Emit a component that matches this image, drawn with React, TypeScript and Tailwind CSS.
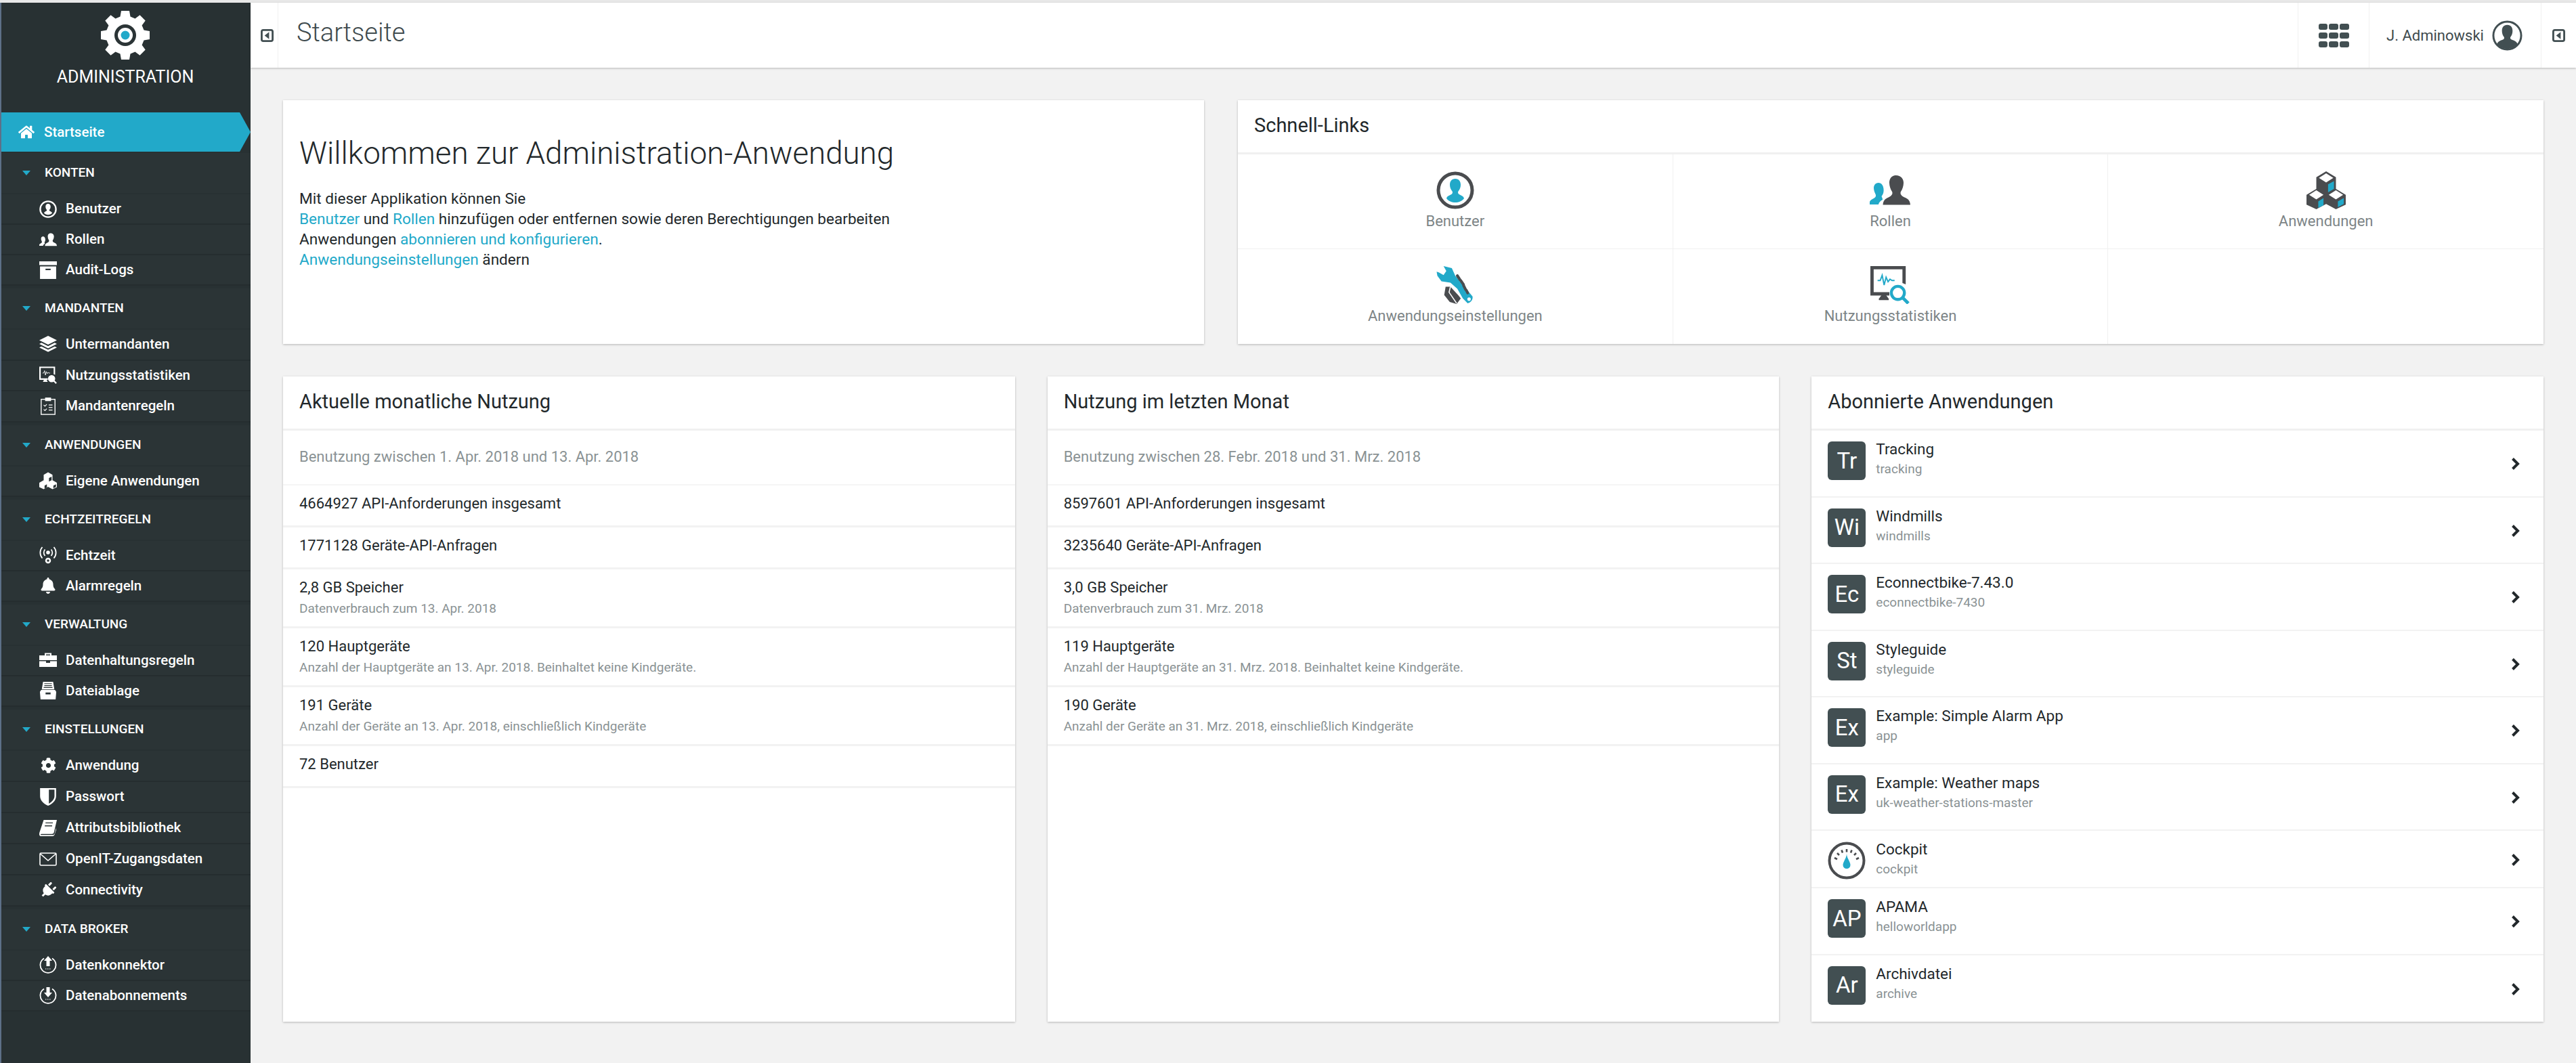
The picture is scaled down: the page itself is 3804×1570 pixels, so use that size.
import React from 'react';
import { FaBell, FaCog, FaHome, FaPlug } from 'react-icons/fa';

const BLUE = '#22a9c9';
const DARK = '#4a4c4f';

type Tone = { main?: string; accent?: string };

const UserCircleIcon = ({ main = '#fff', accent = '#fff' }: Tone) => (
  <svg viewBox="0 0 56 56" className="w-full h-full">
    <circle cx="28" cy="28" r="25" fill="none" stroke={main} strokeWidth="5" />
    <path d="M28 11c-5.500 0-8 4-8 9 0 4 1.500 7 3.500 9.500 .8 1 .6 3-.5 4-2.500 2-7 2.500-8 6.500 3 4 8 6 13 6s10-2 13-6c-1-4-5.500-4.500-8-6.500-1.100-1-1.300-3-.5-4 2-2.500 3.500-5.500 3.500-9.500 0-5-2.500-9-8-9z" fill={accent} />
  </svg>
);

const RolesIcon = ({ main = '#fff', accent = '#fff' }: Tone) => (
  <svg viewBox="0 0 60 44" className="w-full h-full">
    <path d="M13 11c-5 0-7 4-7 8 0 4 2 7 3 10 .5 2-1 4-3 5-3 1.500-6 3-6 6v3h13c.5-3 3-5.500 6-7 .2-2-.8-3-1.500-5 2.500-3 3.500-7 3-11-.4-5-3-9-7.500-9z" fill={accent} />
    <path d="M39 0c-7 0-10 5-10 11 0 5 2 10 4 13 1.500 3-.5 6-3.500 7.500C25 34 20 35 19.500 43.500H60c-.5-8.500-5.500-9.500-10.500-12C46.500 30 44.500 27 46 24c2-3 4-8 4-13 0-6-4-11-11-11z" fill={main} />
  </svg>
);

const CubesIcon = ({ main = '#fff', accent = '#fff' }: Tone) => (
  <svg viewBox="0 0 60 58" className="w-full h-full">
    <path d="M30 0l15 9v18l15 9v15l-15 7-15-8-15 8-15-7V36l15-9V9z" fill={main} />
    <path d="M30 3l11 7-11 7-11-7zM15 29l11 7-11 7-11-7zM45 29l11 7-11 7-11-7z" fill="#fff" />
    <path d="M33 20l9-5v12l-9 5zM18 46l8-5v11l-8 4zM48 46l9-5v9l-9 5z" fill={accent} />
  </svg>
);

const WrenchIcon = ({ main = '#fff', accent = '#fff' }: Tone) => (
  <svg viewBox="0 0 54 55" className="w-full h-full">
    <path d="M10 0l12 3 5 11 25 30c1 4-2 9-7 10l-7-7-8-14-10-9-13-2-6-8-1-6 3 1 7 4 4-6z" fill={accent} />
    <circle cx="47" cy="48" r="2.500" fill="#fff" />
    <path d="M30 14l4 6M35 21l4 6M39 28l3 6M43 35l2 4" stroke={main} strokeWidth="4" strokeLinecap="round" />
    <path d="M13 30l7 0 12 13 3 4-6 8-10-3-8-10z" fill={main} />
    <path d="M20 30l-2 8 11 16" stroke="#fff" strokeWidth="1.500" fill="none" />
  </svg>
);

const MonitorIcon = ({ main = '#fff', accent = '#fff' }: Tone) => (
  <svg viewBox="0 0 60 58" className="w-full h-full">
    <path d="M0 0h54v28l-5-2V5H5v35h24v5H0z" fill={main} />
    <path d="M13 50l5-7h5l5 7 v2H13z" fill={main} />
    <path d="M11 22h4l3-8 3 15 3-12 3 7 3-4 3 2h4" fill="none" stroke={accent} strokeWidth="2" />
    <circle cx="42" cy="41" r="10" fill="#fff" stroke={accent} strokeWidth="4.500" />
    <path d="M49 48l9 9" stroke={accent} strokeWidth="5" />
  </svg>
);

const ArchiveIcon = () => (
  <svg viewBox="0 0 24 24" className="w-full h-full" fill="#fff">
    <path d="M0 0h24v5H0zM1 7h22v17H1z" />
    <rect x="8.500" y="10" width="7" height="2" fill="#2b3436" />
  </svg>
);

const LayersIcon = () => (
  <svg viewBox="0 0 24 24" className="w-full h-full" fill="#fff">
    <path d="M12 0l12 6-12 6L0 6zM3 9.500l9 4.500 9-4.500 3 1.500-12 6-12-6zM3 14.500l9 4.500 9-4.500 3 1.500-12 6-12-6z" />
  </svg>
);

const ClipboardIcon = () => (
  <svg viewBox="0 0 24 28" className="w-full h-full" fill="none" stroke="#fff" strokeWidth="1.500">
    <rect x="1" y="3" width="22" height="24" />
    <rect x="8" y="1" width="8" height="4" fill="#fff" />
    <path d="M5 12l2 2 3-3M5 19l2 2 3-3M13 12h6M13 16h6M13 20h6" strokeWidth="1.200" />
  </svg>
);

const LiveIcon = () => (
  <svg viewBox="0 0 26 26" className="w-full h-full" fill="none" stroke="#fff" strokeWidth="1.800">
    <circle cx="13" cy="9" r="2.800" fill="#fff" stroke="none" />
    <path d="M8.500 4.500a7 7 0 0 0 0 9.500M17.500 4.500a7 7 0 0 1 0 9.500M4.500 1a12.500 12.500 0 0 0 0 16.500M21.500 1a12.500 12.500 0 0 1 0 16.500" />
    <circle cx="13" cy="21" r="3" strokeWidth="2.500" />
  </svg>
);

const ToolboxIcon = () => (
  <svg viewBox="0 0 26 24" className="w-full h-full" fill="#fff">
    <path d="M8 5V1.500h10V5h-2V3.500h-6V5zM0 5h26v7H0zM0 13.500h10V16h6v-2.500h10V22H0z" />
  </svg>
);

const DrawerIcon = () => (
  <svg viewBox="0 0 26 28" className="w-full h-full" fill="#fff">
    <path d="M5 0h16l2 12H3zM2 13h22l2 3-1 12H1L0 16z" />
    <path d="M7 3h12M7 6h12M6 9h14" stroke="#2b3436" strokeWidth="1.200" />
    <rect x="9" y="17" width="8" height="3" fill="#2b3436" />
  </svg>
);

const ShieldIcon = () => (
  <svg viewBox="0 0 20 22" className="w-full h-full">
    <path d="M0 0h20v10c0 6-5 10-10 12C5 20 0 16 0 10z" fill="#fff" />
    <path d="M11 2h7v8c0 4-3 7-7 9.500z" fill="#2b3436" />
  </svg>
);

const BookIcon = () => (
  <svg viewBox="0 0 24 22" className="w-full h-full" fill="#fff">
    <path d="M6 0h18l-4 17c-.4 1.500-1.500 2-3 2H3c-1 0-1.500 1-1 1.500h16c1.500 0 2.500-1 3-2l2-8v3l-2 6c-.5 1.500-1.500 2.500-3 2.500H2c-1.500 0-2-1.500-2-3 0-1 .5-2.500 1-4z" />
    <path d="M8.500 4h10M7.500 8h10" stroke="#2b3436" strokeWidth="1.200" />
  </svg>
);

const MailIcon = () => (
  <svg viewBox="0 0 26 20" className="w-full h-full" fill="none" stroke="#fff" strokeWidth="1.600">
    <rect x="1" y="1" width="24" height="18" rx="1.500" />
    <path d="M1.500 2L13 12 24.500 2" />
  </svg>
);

const CircleArrowIcon = ({ up }: { up: boolean }) => (
  <svg viewBox="0 0 26 26" className="w-full h-full">
    <path d="M7 3.500a11.500 11.500 0 1 0 12 0" fill="none" stroke="#fff" strokeWidth="1.800" />
    <path d={up ? 'M13 0l6 7h-3.500v8h-5V7H7z' : 'M10.500 1h5v8H19l-6 7-6-7h3.500z'} fill="#fff" />
    <path d="M9 19h1.500M12 19h1.500M15 19h1.500" stroke="#fff" strokeWidth="1.200" />
  </svg>
);

const GearLogo = () => (
  <svg viewBox="0 0 72 72" className="w-[72px] h-[72px]">
    <path
      fill="#fff"
      d="M30 0h12l1.500 8.500 7 2.900L57.500 6.300l8.200 8.200-5.100 7 2.900 7L72 30v12l-8.500 1.500-2.900 7 5.100 7-8.200 8.200-7-5.100-7 2.900L42 72H30l-1.500-8.500-7-2.900-7 5.100-8.200-8.200 5.100-7-2.900-7L0 42V30l8.500-1.500 2.900-7-5.100-7 8.200-8.200 7 5.100 7-2.900z"
    />
    <circle cx="36" cy="36" r="19" fill="#fff" />
    <circle cx="36" cy="36" r="16" fill="#2b3436" />
    <circle cx="36" cy="36" r="11" fill="#fff" />
    <circle cx="36" cy="36" r="6.500" fill={BLUE} />
  </svg>
);

const GridIcon = () => (
  <div className="grid grid-cols-3 gap-x-[2px] gap-y-[4px] w-[45px]">
    {Array.from({ length: 9 }).map((_, i) => (
      <div key={i} className="h-[9px] rounded-[3px] bg-[#424f52]" />
    ))}
  </div>
);

const Avatar = () => (
  <svg viewBox="0 0 46 46" className="w-[45px] h-[45px]">
    <circle cx="23" cy="23" r="21" fill="#fff" stroke="#424f52" strokeWidth="3" />
    <path d="M23 7c-5.500 0-8 4-8 9 0 4 1.500 7 3 9 .8 1 .5 3-1 4-3 1.500-8 2-9.500 7 3.500 4 9 7 15.500 7s12-3 15.500-7c-1.500-5-6.500-5.500-9.500-7-1.500-1-1.800-3-1-4 1.500-2 3-5 3-9 0-5-2.500-9-8-9z" fill="#424f52" />
  </svg>
);

const ToggleIcon = () => (
  <svg viewBox="0 0 20 20" className="w-[19px] h-[19px]">
    <rect x="1.500" y="1.500" width="17" height="17" rx="2.500" fill="none" stroke="#424f52" strokeWidth="3" />
    <path d="M13 4.500v11L6 10z" fill="#424f52" />
  </svg>
);

const Chevron = () => (
  <svg viewBox="0 0 14 20" className="w-[14px] h-[20px]">
    <path d="M2.500 2.500l7.500 7.500-7.500 7.500" fill="none" stroke="#22282b" strokeWidth="4" />
  </svg>
);

const GaugeIcon = () => (
  <svg viewBox="0 0 56 56" className="w-[56px] h-[56px]">
    <circle cx="28" cy="28" r="25.500" fill="#fff" stroke={DARK} strokeWidth="4" />
    <path
      d="M10 24l4 2M14 17l3 3M20.500 12.500l1.500 4M28 11v4.500M35.500 12.500l-1.500 4M42 17l-3 3M46 24l-4 2"
      stroke={DARK}
      strokeWidth="2.600"
      fill="none"
    />
    <path d="M28 18c0 6 5.500 12 5.500 16.500a5.500 5.500 0 0 1-11 0C22.500 30 28 24 28 18z" fill={BLUE} />
  </svg>
);

type NavItem = { label: string; icon: React.ReactNode };
type NavGroup = { title: string; rowClass: string; items: NavItem[] };

const navGroups: NavGroup[] = [
  {
    title: 'KONTEN',
    rowClass: 'h-[45px]',
    items: [
      { label: 'Benutzer', icon: <UserCircleIcon /> },
      { label: 'Rollen', icon: <RolesIcon /> },
      { label: 'Audit-Logs', icon: <ArchiveIcon /> },
    ],
  },
  {
    title: 'MANDANTEN',
    rowClass: 'h-[45.500px]',
    items: [
      { label: 'Untermandanten', icon: <LayersIcon /> },
      { label: 'Nutzungsstatistiken', icon: <MonitorIcon /> },
      { label: 'Mandantenregeln', icon: <ClipboardIcon /> },
    ],
  },
  {
    title: 'ANWENDUNGEN',
    rowClass: 'h-[45px]',
    items: [{ label: 'Eigene Anwendungen', icon: <CubesIcon accent="#2b3436" /> }],
  },
  {
    title: 'ECHTZEITREGELN',
    rowClass: 'h-[45px]',
    items: [
      { label: 'Echtzeit', icon: <LiveIcon /> },
      { label: 'Alarmregeln', icon: <FaBell className="w-[24px] h-[24px]" color="#fff" /> },
    ],
  },
  {
    title: 'VERWALTUNG',
    rowClass: 'h-[45px]',
    items: [
      { label: 'Datenhaltungsregeln', icon: <ToolboxIcon /> },
      { label: 'Dateiablage', icon: <DrawerIcon /> },
    ],
  },
  {
    title: 'EINSTELLUNGEN',
    rowClass: 'h-[46px]',
    items: [
      { label: 'Anwendung', icon: <FaCog className="w-[23px] h-[23px]" color="#fff" /> },
      { label: 'Passwort', icon: <ShieldIcon /> },
      { label: 'Attributsbibliothek', icon: <BookIcon /> },
      { label: 'OpenIT-Zugangsdaten', icon: <MailIcon /> },
      { label: 'Connectivity', icon: <FaPlug className="w-[24px] h-[24px] rotate-45" color="#fff" /> },
    ],
  },
  {
    title: 'DATA BROKER',
    rowClass: 'h-[45px]',
    items: [
      { label: 'Datenkonnektor', icon: <CircleArrowIcon up /> },
      { label: 'Datenabonnements', icon: <CircleArrowIcon up={false} /> },
    ],
  },
];

const Sidebar = () => (
  <aside className="w-[370px] shrink-0 border-l-2 border-[#5d7088] bg-[#283133] text-white">
    <div className="h-[162px] flex flex-col items-center pt-[12px] pr-[2px]">
      <GearLogo />
      <div className="mt-[10px] text-[25px] leading-[32px]">ADMINISTRATION</div>
    </div>

    {/* Active entry */}
    <div className="h-[58px] mb-[2px] bg-[#22a9c9] flex items-center pl-[25px] [clip-path:polygon(0_0,352px_0,368px_50%,352px_100%,0_100%)]">
      <FaHome className="w-[24px] h-[22px]" color="#fff" />
      <span className="ml-[14px] text-[20.500px] font-medium">Startseite</span>
    </div>

    {navGroups.map((group) => (
      <div key={group.title} className="mb-[4px]">
        <div className="h-[61px] flex items-center pl-[31px] bg-[#2b3436] border-b-[2px] border-[#283133]">
          <div className="w-0 h-0 border-l-[6px] border-r-[6px] border-t-[7px] border-l-transparent border-r-transparent border-t-[#22a9c9]" />
          <span className="ml-[21px] text-[19px] font-medium">{group.title}</span>
        </div>
        {group.items.map((item) => (
          <div
            key={item.label}
            className={`${group.rowClass} flex items-center pl-[56px] bg-[#2b3436] border-b-[2px] border-[#252d2f]`}
          >
            <div className="w-[26px] h-[26px] shrink-0 flex items-center justify-center">{item.icon}</div>
            <span className="ml-[13px] text-[20.500px] font-medium whitespace-nowrap">{item.label}</span>
          </div>
        ))}
      </div>
    ))}
  </aside>
);

const TopBar = () => (
  <header className="h-[96px] shrink-0 bg-white shadow-[0_1px_3px_rgba(0,0,0,0.25)] flex items-stretch">
    <div className="w-[41px] flex items-center justify-end pr-[6px] border-r border-[#f0f0f0]">
      <ToggleIcon />
    </div>
    <h1 className="ml-[27px] pb-[8px] self-center text-[38px] font-light text-[#3f4b4e]">Startseite</h1>
    <div className="ml-auto flex items-stretch">
      <div className="w-[105px] flex items-center justify-center border-l border-[#f0f0f0]">
        <GridIcon />
      </div>
      <div className="w-[254px] flex items-center pl-[25px] border-l border-[#f0f0f0]">
        <span className="text-[22px] text-[#3f4b4e] whitespace-nowrap">J. Adminowski</span>
        <span className="ml-[12px]">
          <Avatar />
        </span>
      </div>
      <div className="w-[52px] flex items-center justify-center border-l border-[#f0f0f0]">
        <ToggleIcon />
      </div>
    </div>
  </header>
);

const Link = ({ children }: { children: React.ReactNode }) => <span className="text-[#22a9c9]">{children}</span>;

const WelcomeCard = () => (
  <section className="bg-white shadow-[0_1px_3px_rgba(0,0,0,0.25)] pl-[24px] pt-[50px]">
    <h2 className="text-[45.700px] leading-[58px] font-light text-[#22282b] whitespace-nowrap">
      Willkommen zur Administration-Anwendung
    </h2>
    <div className="mt-[23px] text-[22.600px] leading-[30px] text-[#22282b]">
      <div>Mit dieser Applikation können Sie</div>
      <div>
        <Link>Benutzer</Link> und <Link>Rollen</Link> hinzufügen oder entfernen sowie deren Berechtigungen bearbeiten
      </div>
      <div>
        Anwendungen <Link>abonnieren und konfigurieren</Link>.
      </div>
      <div>
        <Link>Anwendungseinstellungen</Link> ändern
      </div>
    </div>
  </section>
);

const quickLinks = [
  { label: 'Benutzer', w: 'w-[56px]', icon: <UserCircleIcon main={DARK} accent={BLUE} /> },
  { label: 'Rollen', w: 'w-[60px]', icon: <RolesIcon main={DARK} accent={BLUE} /> },
  { label: 'Anwendungen', w: 'w-[60px]', icon: <CubesIcon main={DARK} accent={BLUE} /> },
  { label: 'Anwendungseinstellungen', w: 'w-[56px]', icon: <WrenchIcon main={DARK} accent={BLUE} /> },
  { label: 'Nutzungsstatistiken', w: 'w-[60px]', icon: <MonitorIcon main={DARK} accent={BLUE} /> },
];

const QuickLinks = () => (
  <section className="bg-white shadow-[0_1px_3px_rgba(0,0,0,0.25)] flex flex-col">
    <CardTitle title="Schnell-Links" className="h-[80px]" />
    <div className="flex-1 grid grid-cols-3 grid-rows-2">
      {quickLinks.map((link, i) => (
        <div
          key={link.label}
          className={`flex flex-col items-center pt-[25px] border-[#f0f0f0] ${i % 3 !== 2 ? 'border-r' : ''} ${i < 3 ? 'border-b' : ''}`}
        >
          <div className={`${link.w} h-[56px]`}>{link.icon}</div>
          <span className="mt-[4px] text-[22px] leading-[28px] text-[#7d8587]">{link.label}</span>
        </div>
      ))}
      <div />
    </div>
  </section>
);

const CardTitle = ({ title, className }: { title: string; className: string }) => (
  <div className={`${className} shrink-0 flex items-center pl-[24px] pb-[2px] border-b-[3px] border-[#f0f0f0]`}>
    <h3 className="text-[29px] text-[#22282b] whitespace-nowrap">{title}</h3>
  </div>
);

type UsageRow = { text: string; sub?: string };

const UsageCard = ({ title, period, rows }: { title: string; period: string; rows: UsageRow[] }) => (
  <section className="bg-white shadow-[0_1px_3px_rgba(0,0,0,0.25)]">
    <CardTitle title={title} className="h-[80px]" />
    <div className="h-[81px] flex items-center pl-[24px] pb-[2px] border-b-[2px] border-[#f5f5f5] text-[22px] text-[#8a9294]">
      {period}
    </div>
    {rows.map((row) => (
      <div
        key={row.text}
        className={`${row.sub ? 'h-[87px] pb-[1px]' : 'h-[62px] pb-[6px]'} flex flex-col justify-center pl-[24px] border-b-[3px] border-[#f2f2f2]`}
      >
        <div className="text-[22px] leading-[30px] text-[#22282b]">{row.text}</div>
        {row.sub && <div className="mt-[2px] text-[19px] leading-[28px] text-[#8a9294]">{row.sub}</div>}
      </div>
    ))}
  </section>
);

const apps = [
  { badge: 'Tr', name: 'Tracking', key: 'tracking' },
  { badge: 'Wi', name: 'Windmills', key: 'windmills' },
  { badge: 'Ec', name: 'Econnectbike-7.43.0', key: 'econnectbike-7430' },
  { badge: 'St', name: 'Styleguide', key: 'styleguide' },
  { badge: 'Ex', name: 'Example: Simple Alarm App', key: 'app' },
  { badge: 'Ex', name: 'Example: Weather maps', key: 'uk-weather-stations-master' },
  { badge: '', name: 'Cockpit', key: 'cockpit' },
  { badge: 'AP', name: 'APAMA', key: 'helloworldapp' },
  { badge: 'Ar', name: 'Archivdatei', key: 'archive' },
];

const AppsCard = () => (
  <section className="bg-white shadow-[0_1px_3px_rgba(0,0,0,0.25)] flex flex-col">
    <CardTitle title="Abonnierte Anwendungen" className="h-[80px]" />
    {apps.map((app) => (
      <div
        key={app.key}
        className={`${app.badge ? 'h-[98.500px]' : 'h-[85px]'} flex items-start pt-[16px] pl-[24px] pr-[34px] border-b-[2px] border-[#f2f2f2] last:border-b-0`}
      >
        {app.badge ? (
          <div className="w-[56px] h-[57px] rounded-[6px] bg-[#424f52] text-white flex items-center justify-center text-[33px]">
            {app.badge}
          </div>
        ) : (
          <GaugeIcon />
        )}
        <div className="ml-[15px] -mt-[4px]">
          <div className="text-[22.500px] leading-[30px] text-[#22282b]">{app.name}</div>
          <div className="text-[19px] leading-[30px] text-[#8a9294]">{app.key}</div>
        </div>
        <div className="ml-auto self-center -mt-[14px]">
          <Chevron />
        </div>
      </div>
    ))}
  </section>
);

const currentRows: UsageRow[] = [
  { text: '4664927 API-Anforderungen insgesamt' },
  { text: '1771128 Geräte-API-Anfragen' },
  { text: '2,8 GB Speicher', sub: 'Datenverbrauch zum 13. Apr. 2018' },
  { text: '120 Hauptgeräte', sub: 'Anzahl der Hauptgeräte an 13. Apr. 2018. Beinhaltet keine Kindgeräte.' },
  { text: '191 Geräte', sub: 'Anzahl der Geräte an 13. Apr. 2018, einschließlich Kindgeräte' },
  { text: '72 Benutzer' },
];

const lastRows: UsageRow[] = [
  { text: '8597601 API-Anforderungen insgesamt' },
  { text: '3235640 Geräte-API-Anfragen' },
  { text: '3,0 GB Speicher', sub: 'Datenverbrauch zum 31. Mrz. 2018' },
  { text: '119 Hauptgeräte', sub: 'Anzahl der Hauptgeräte an 31. Mrz. 2018. Beinhaltet keine Kindgeräte.' },
  { text: '190 Geräte', sub: 'Anzahl der Geräte an 31. Mrz. 2018, einschließlich Kindgeräte' },
];

export default function App() {
  return (
    <div className="w-[3804px] h-[1570px] overflow-hidden bg-[#e8e8e8] pt-[4px] font-['Roboto',sans-serif]">
      <div className="h-[1566px] flex bg-[#f2f2f2]">
        <Sidebar />
        <main className="flex-1 flex flex-col min-w-0">
          <TopBar />
          <div className="pt-[48px] px-[48px]">
            <div className="grid grid-cols-[1360px_1fr] gap-[50px] h-[360px]">
              <WelcomeCard />
              <QuickLinks />
            </div>
            <div className="mt-[48px] grid grid-cols-3 gap-[48px] h-[950px]">
              <UsageCard title="Aktuelle monatliche Nutzung" period="Benutzung zwischen 1. Apr. 2018 und 13. Apr. 2018" rows={currentRows} />
              <UsageCard title="Nutzung im letzten Monat" period="Benutzung zwischen 28. Febr. 2018 und 31. Mrz. 2018" rows={lastRows} />
              <AppsCard />
            </div>
          </div>
        </main>
      </div>
    </div>
  );
}
